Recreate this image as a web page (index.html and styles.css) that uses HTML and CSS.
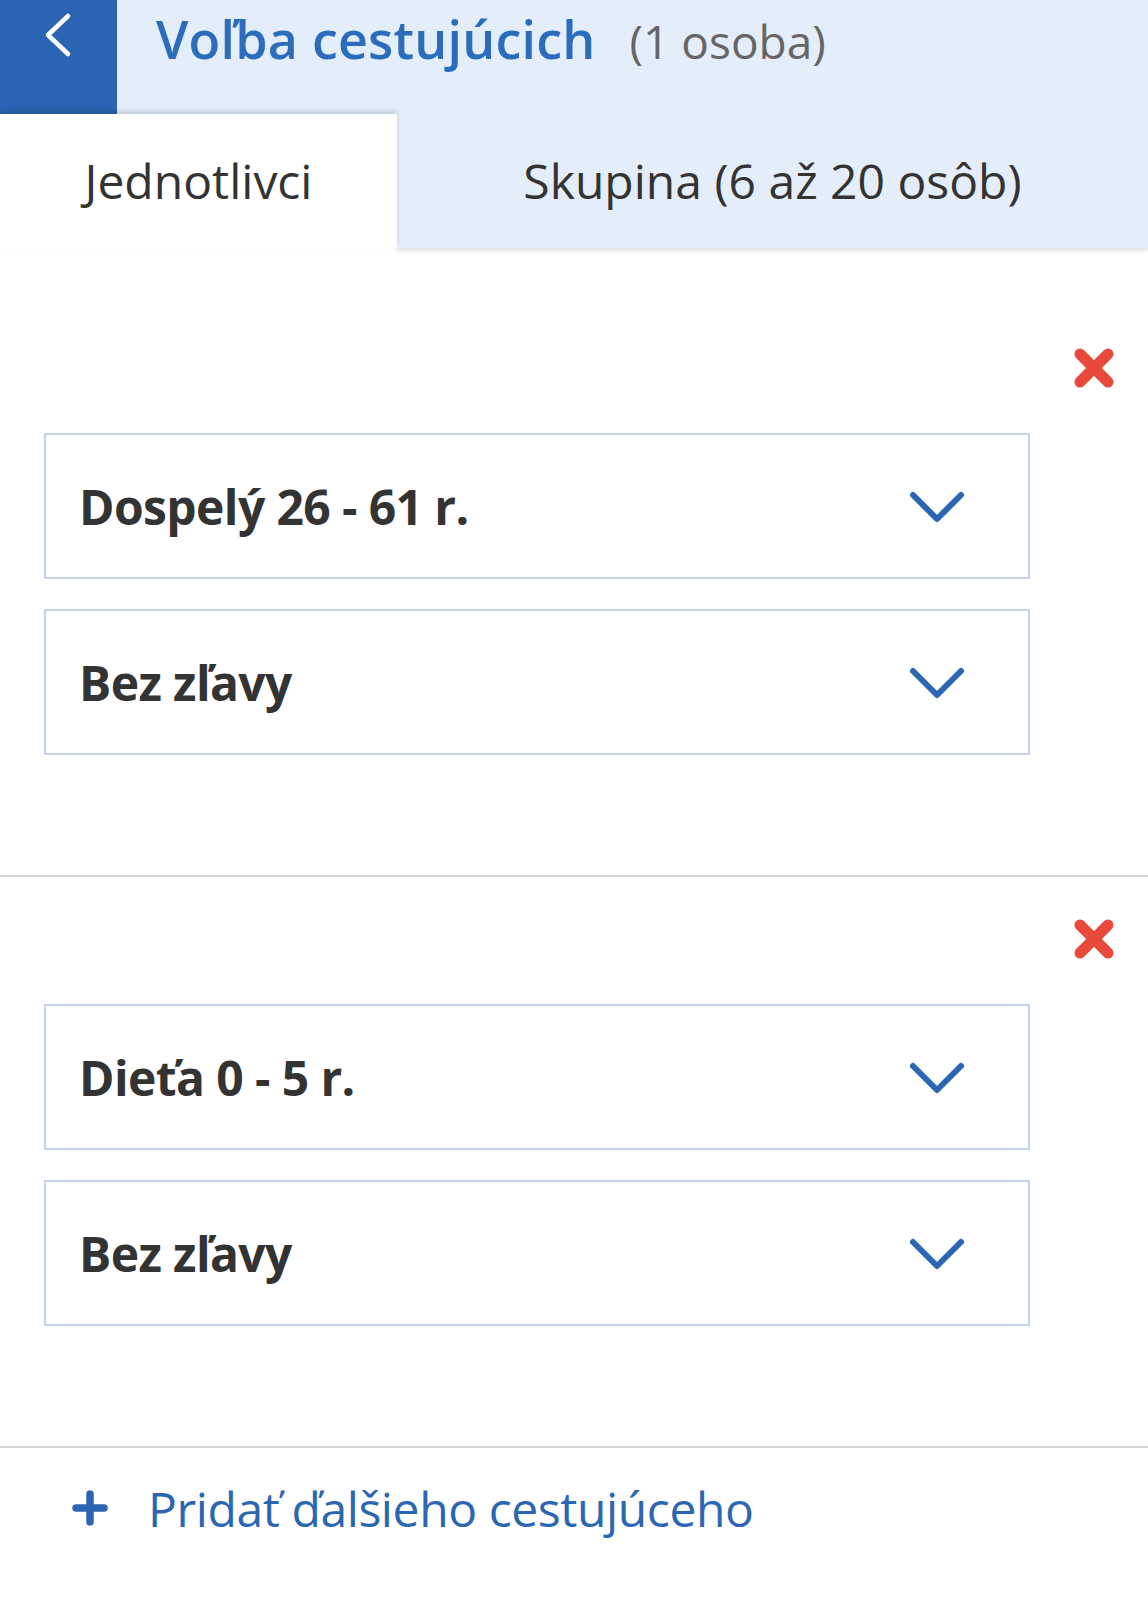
FILE: index.html
```html
<!DOCTYPE html>
<html>

<head>
    <link rel="stylesheet" href="styles.css">
</head>

<body>
    <div class="header">
        <div class="topbar">
            <div class="back">
                <svg width="40" height="50" viewBox="0 0 40 50">
                    <polyline points="26,6 6,25 26,44" fill="none" stroke="#fff" stroke-width="4.5" stroke-linecap="round" stroke-linejoin="round" />
                </svg>
            </div>
            <h1 class="title">Voľba cestujúcich</h1>
            <span class="count">(1 osoba)</span>
        </div>
        <div class="tabs">
            <div class="tab active">Jednotlivci</div>
            <div class="tab">Skupina (6 až 20 osôb)</div>
        </div>
    </div>

    <div class="passenger first">
        <div class="remove">
            <svg width="42" height="42" viewBox="0 0 42 42">
                <path d="M7 7 L35 35 M35 7 L7 35" stroke="#e8493a" stroke-width="11" stroke-linecap="round" />
            </svg>
        </div>
        <div class="select">
            <span>Dospelý 26 - 61 r.</span>
            <svg class="chev" width="58" height="34" viewBox="0 0 58 34">
                <polyline points="5,5 29,29 53,5" fill="none" stroke="#2b66b3" stroke-width="6" stroke-linecap="round" stroke-linejoin="round" />
            </svg>
        </div>
        <div class="select">
            <span>Bez zľavy</span>
            <svg class="chev" width="58" height="34" viewBox="0 0 58 34">
                <polyline points="5,5 29,29 53,5" fill="none" stroke="#2b66b3" stroke-width="6" stroke-linecap="round" stroke-linejoin="round" />
            </svg>
        </div>
    </div>

    <div class="passenger">
        <div class="remove">
            <svg width="42" height="42" viewBox="0 0 42 42">
                <path d="M7 7 L35 35 M35 7 L7 35" stroke="#e8493a" stroke-width="11" stroke-linecap="round" />
            </svg>
        </div>
        <div class="select">
            <span>Dieťa 0 - 5 r.</span>
            <svg class="chev" width="58" height="34" viewBox="0 0 58 34">
                <polyline points="5,5 29,29 53,5" fill="none" stroke="#2b66b3" stroke-width="6" stroke-linecap="round" stroke-linejoin="round" />
            </svg>
        </div>
        <div class="select">
            <span>Bez zľavy</span>
            <svg class="chev" width="58" height="34" viewBox="0 0 58 34">
                <polyline points="5,5 29,29 53,5" fill="none" stroke="#2b66b3" stroke-width="6" stroke-linecap="round" stroke-linejoin="round" />
            </svg>
        </div>
    </div>

    <div class="add">
        <svg width="36" height="36" viewBox="0 0 36 36">
            <path d="M18 4 V32 M4 18 H32" stroke="#2b66b3" stroke-width="7.5" stroke-linecap="round" />
        </svg>
        <span>Pridať ďalšieho cestujúceho</span>
    </div>
</body>

</html>
```

FILE: styles.css
```css
body {
    margin: 0;
    background-color: #fff;
    font-family: 'Open Sans', 'Noto Sans', sans-serif;
    color: #333;
}

.header {
    background-color: #e4eefa;
}

.topbar {
    display: flex;
    align-items: center;
    height: 114px;
}

.back {
    width: 117px;
    height: 114px;
    background-color: #2a64b3;
    display: flex;
    justify-content: center;
    padding-top: 10px;
    padding-left: 6px;
    box-sizing: border-box;
    align-self: flex-start;
}

.title {
    margin: 0 0 0 39px;
    font-size: 52px;
    font-weight: 600;
    color: #2b6cbd;
    align-self: flex-start;
    line-height: 78px;
    letter-spacing: 0.2px;
}

.count {
    margin-left: 34px;
    font-size: 46px;
    color: #666;
    align-self: flex-start;
    line-height: 82px;
}

.tabs {
    display: flex;
    height: 134px;
}

.tab {
    display: flex;
    align-items: center;
    justify-content: center;
    font-size: 48px;
    flex: 1;
    padding-bottom: 2px;
    box-shadow: 0 3px 4px rgba(0, 0, 0, 0.12);
}

.tab.active {
    flex: 0 0 397px;
    background-color: #fff;
    box-shadow: 0 -3px 5px rgba(0, 0, 0, 0.15);
    position: relative;
    z-index: 1;
}

.passenger {
    padding: 41px 0 120px;
    border-bottom: 2px solid #d6d6d6;
}

.passenger.first {
    padding-top: 99px;
}

.remove {
    display: flex;
    justify-content: flex-end;
    padding-right: 33px;
    margin-bottom: 44px;
}

.select {
    margin-left: 44px;
    width: 986px;
    height: 146px;
    box-sizing: border-box;
    border: 2px solid #c4d3ea;
    display: flex;
    align-items: center;
    justify-content: space-between;
    padding: 0 62px 0 33px;
    font-size: 48px;
    font-weight: 700;
    letter-spacing: -0.6px;
    color: #333;
}

.select + .select {
    margin-top: 30px;
}

.chev {
    margin-top: 2px;
}

.add {
    display: flex;
    align-items: center;
    height: 120px;
    padding-left: 72px;
    color: #2b66b3;
    font-size: 48px;
    letter-spacing: -0.4px;
}

.add span {
    margin-left: 40px;
}
```
